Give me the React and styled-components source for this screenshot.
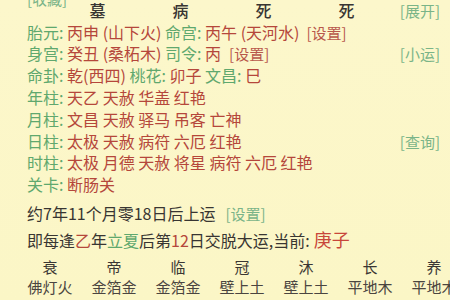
import React from 'react'
import styled, { createGlobalStyle } from 'styled-components'

const GlobalStyle = createGlobalStyle`
  html, body {
    margin: 0;
    padding: 0;
    background: #fcf7cb;
    overflow: hidden;
  }
  body {
    font-family: "Noto Sans CJK SC", "Noto Sans", sans-serif;
  }
`

const green = '#5fa86e'
const red = '#b5473b'
const dark = '#383532'
const link = '#7ab488'

const Page = styled.div`
  width: 450px;
  height: 300px;
  font-size: 16px;
  line-height: 21.8px;
  color: ${dark};
  background: linear-gradient(180deg, #fcf7cb 0%, #fbf6c6 100%);
  overflow: hidden;
`

const Block = styled.div`
  padding: 0 10px 0 27px;
`

const Line = styled.div`
  display: flex;
  justify-content: space-between;
  align-items: center;
  white-space: nowrap;
  height: 21.8px;
  margin-top: ${p => p.$gap || 0}px;
`

const Header = styled.div`
  display: flex;
  align-items: center;
  height: 21.8px;
  padding-left: 29px;
`

const HeadCell = styled.span`
  width: 83px;
  text-align: center;
  font-weight: 500;
  color: ${dark};
`

const Label = styled.span`
  color: ${green};
`

const Value = styled.span`
  color: ${red};
`

const Tag = styled.span`
  color: ${p => (p.$red ? '#b8584c' : link)};
  font-size: 15px;
  margin-left: ${p => p.$ml || 0}px;
`

const Big = styled.span`
  color: #c8463a;
  font-size: 18px;
  margin-left: 4px;
`

const Grid = styled.div`
  display: grid;
  grid-template-columns: repeat(7, 64px);
  padding-left: 18px;
  margin-top: ${p => p.$gap || 0}px;
  font-size: 15px;
  line-height: ${p => p.$lh}px;
  color: ${p => p.$color};
  white-space: nowrap;
`

const Cell = styled.span`
  text-align: center;
`

const rows = [
  ['年柱', '天乙 天赦 华盖 红艳'],
  ['月柱', '文昌 天赦 驿马 吊客 亡神'],
  ['日柱', '太极 天赦 病符 六厄 红艳', '[查询]'],
  ['时柱', '太极 月德 天赦 将星 病符 六厄 红艳'],
  ['关卡', '断肠关'],
]

const stages = ['衰', '帝', '临', '冠', '沐', '长', '养']
const nayin = ['佛灯火', '金箔金', '金箔金', '壁上土', '壁上土', '平地木', '平地木']

export default function App() {
  return (
    <>
      <GlobalStyle />
      <Page>
        <Block>
          <Line $gap={-12}>
            <Tag>[收藏]</Tag>
          </Line>
          <Line $gap={-10}>
            <Header>
              <HeadCell>墓</HeadCell>
              <HeadCell>病</HeadCell>
              <HeadCell>死</HeadCell>
              <HeadCell>死</HeadCell>
            </Header>
            <Tag>[展开]</Tag>
          </Line>
          <Line>
            <span>
              <Label>胎元: </Label>
              <Value>丙申 (山下火) </Value>
              <Label>命宫: </Label>
              <Value>丙午 (天河水)</Value>
              <Tag $red $ml={7}>[设置]</Tag>
            </span>
          </Line>
          <Line>
            <span>
              <Label>身宫: </Label>
              <Value>癸丑 (桑柘木) </Value>
              <Label>司令: </Label>
              <Value>丙</Value>
              <Tag $red $ml={8}>[设置]</Tag>
            </span>
            <Tag>[小运]</Tag>
          </Line>
          <Line>
            <span>
              <Label>命卦: </Label>
              <Value>乾(西四) </Value>
              <Label>桃花: </Label>
              <Value>卯子 </Value>
              <Label>文昌: </Label>
              <Value>巳</Value>
            </span>
          </Line>
          {rows.map(([k, v, t]) => (
            <Line key={k}>
              <span>
                <Label>{k}: </Label>
                <Value>{v}</Value>
              </span>
              {t && <Tag>{t}</Tag>}
            </Line>
          ))}
          <Line $gap={7.5}>
            <span>
              约7年11个月零18日后上运
              <Tag $ml={10}>[设置]</Tag>
            </span>
          </Line>
          <Line $gap={4}>
            <span>
              即每逢<Value>乙</Value>年<Label>立夏</Label>后第<Value>12</Value>日交脱大运,当前:
              <Big>庚子</Big>
            </span>
          </Line>
        </Block>
        <Grid $gap={6} $lh={20} $color="#3a3633">
          {stages.map((s, i) => (
            <Cell key={i}>{s}</Cell>
          ))}
        </Grid>
        <Grid $lh={19} $color="#4a4540">
          {nayin.map((s, i) => (
            <Cell key={i}>{s}</Cell>
          ))}
        </Grid>
      </Page>
    </>
  )
}
